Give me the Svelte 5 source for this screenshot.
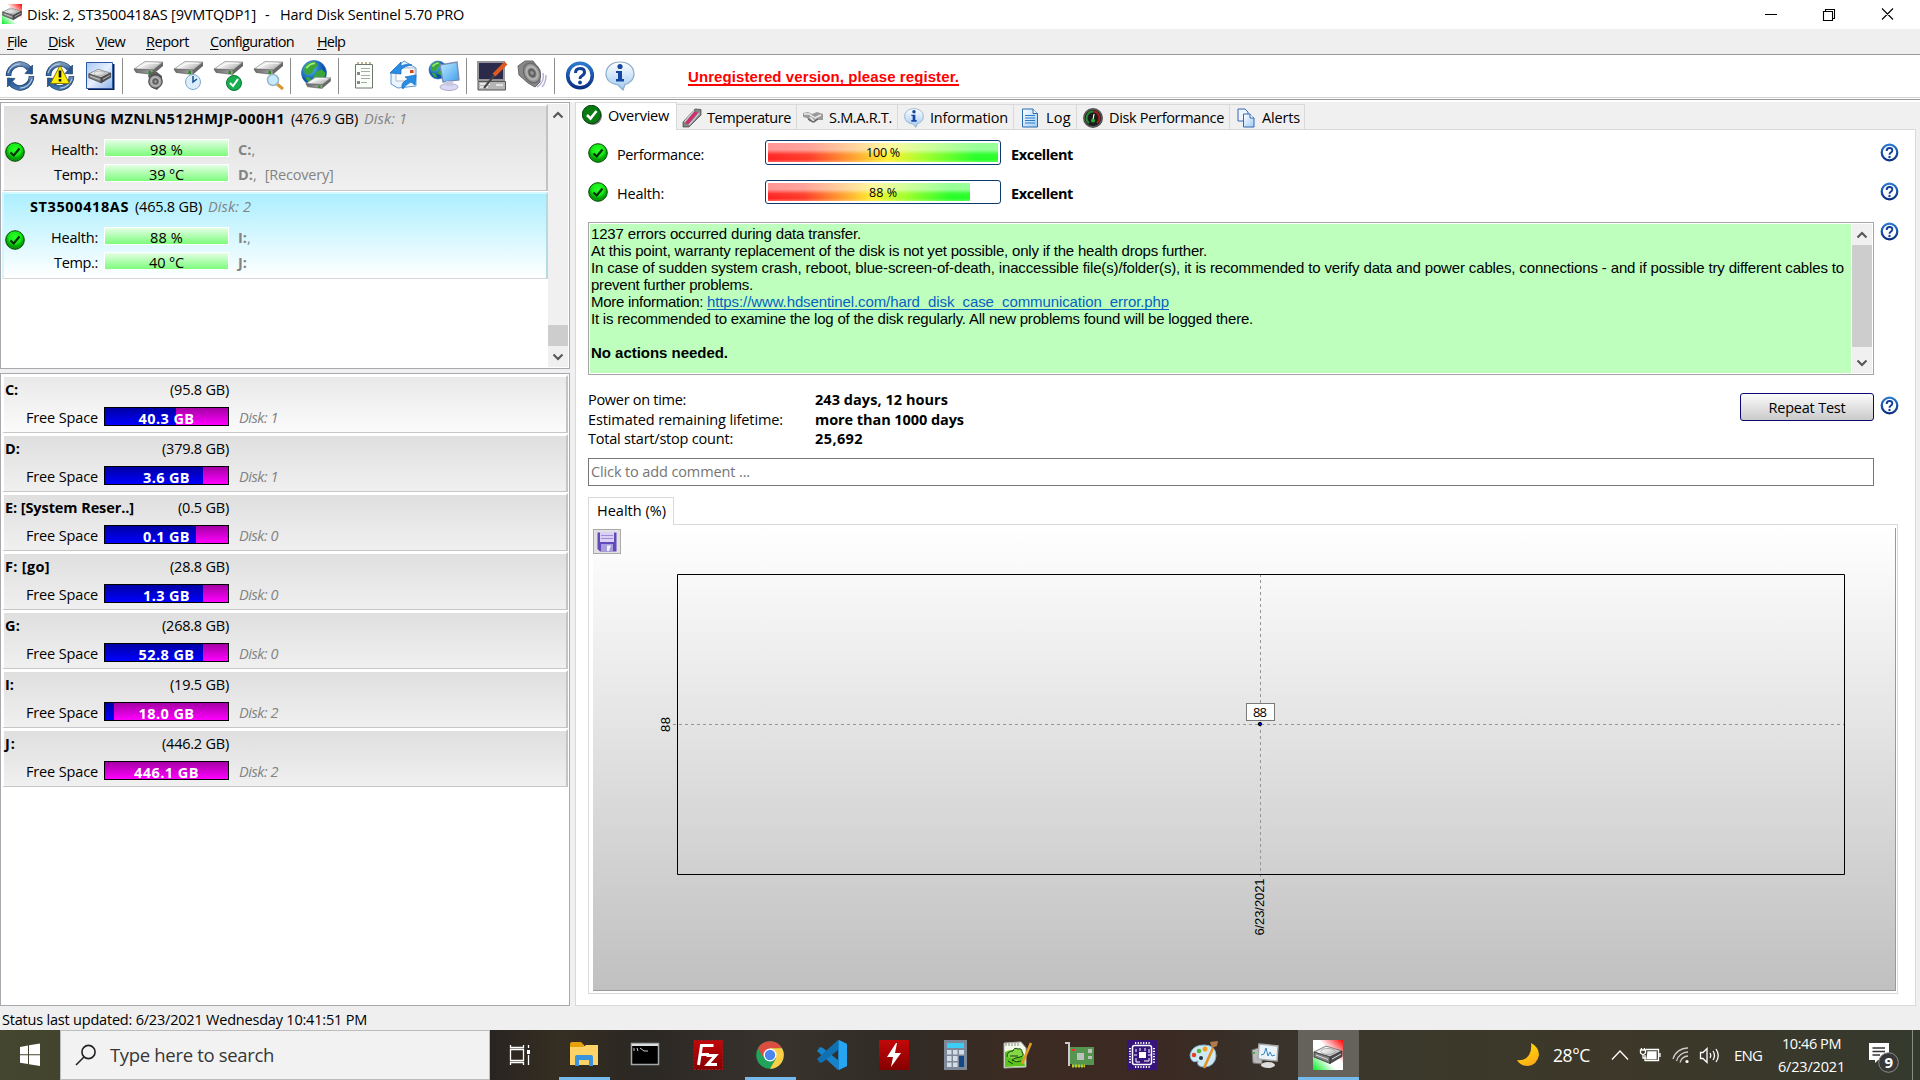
<script>
  // Spreads a text run over an exact pixel width through letter-spacing.
  function fit(node, width) {
    if (!width) return;
    const natural = node.getBoundingClientRect().width;
    node.style.letterSpacing = (width - natural) / node.textContent.length + 'px';
  }

  const menu = [['F', 'ile', 20, 8], ['D', 'isk', 26, 49], ['V', 'iew', 29, 97], ['R', 'eport', 43, 147], ['C', 'onfiguration', 84, 211], ['H', 'elp', 28, 318]];

  const disks = [
    { name: 'SAMSUNG MZNLN512HMJP-000H1', nw: 255, size: '(476.9 GB)', no: 'Disk: 1', health: '98 %', temp: '39 °C', a: 'C:', ac: ',', b: 'D:', bc: ',', extra: '[Recovery]', on: false },
    { name: 'ST3500418AS', nw: 99, size: '(465.8 GB)', no: 'Disk: 2', health: '88 %', temp: '40 °C', a: 'I:', ac: ',', b: 'J:', bc: '', extra: '', on: true }
  ];

  const drives = [
    { name: 'C:', nw: 13, size: '(95.8 GB)', sw: 59, free: '40.3 GB', fw: 56, used: 58, disk: 'Disk: 1' },
    { name: 'D:', nw: 15, size: '(379.8 GB)', sw: 67, free: '3.6 GB', fw: 47, used: 80, disk: 'Disk: 1' },
    { name: 'E: [System Reser..]', nw: 129, size: '(0.5 GB)', sw: 51, free: '0.1 GB', fw: 47, used: 74, disk: 'Disk: 0' },
    { name: 'F: [go]', nw: 45, size: '(28.8 GB)', sw: 59, free: '1.3 GB', fw: 47, used: 80, disk: 'Disk: 0' },
    { name: 'G:', nw: 15, size: '(268.8 GB)', sw: 67, free: '52.8 GB', fw: 56, used: 80, disk: 'Disk: 0' },
    { name: 'I:', nw: 9, size: '(19.5 GB)', sw: 59, free: '18.0 GB', fw: 56, used: 7.5, disk: 'Disk: 2' },
    { name: 'J:', nw: 11, size: '(446.2 GB)', sw: 67, free: '446.1 GB', fw: 65, used: 0, disk: 'Disk: 2' }
  ];

  const tabs = [
    { label: 'Temperature', w: 84, tab: 120, icon: thermo, lead: 5, gap: 5 },
    { label: 'S.M.A.R.T.', w: 63, tab: 101, icon: smart, lead: 6, gap: 6 },
    { label: 'Information', w: 78, tab: 116, icon: info, lead: 6, gap: 6 },
    { label: 'Log', w: 25, tab: 63, icon: logIcon, lead: 7, gap: 7 },
    { label: 'Disk Performance', w: 115, tab: 153, icon: gauge, lead: 6, gap: 6 },
    { label: 'Alerts', w: 38, tab: 75, icon: pages, lead: 7, gap: 7 }
  ];
</script>

{#snippet t(text, width, cls = '')}<span class="t {cls}" use:fit={width}>{text}</span>{/snippet}

{#snippet slab()}
  <path d="M1 9 12 1.5 30 2 20 10Z" fill="url(#lid)" stroke="#8d8d8d" stroke-width=".7" />
  <path d="M5 8.500 14 3 26 3.500" fill="none" stroke="#fff" opacity=".8" />
  <path d="M1 9 20 10V14.5L3 12.5Z" fill="url(#metal)" stroke="#555" stroke-width=".6" />
  <path d="M20 10 30 2V6L20 14.5Z" fill="#686868" />
  <path d="M15.500 11v3h2.500v-3Z" fill="#298b21" />
{/snippet}

{#snippet brick()}
  <path d="M1 12 13 6 29 11 17 17Z" fill="url(#lid)" stroke="#666" stroke-width=".8" />
  <path d="M1 12 17 17V23.500L1 17Z" fill="#7f7f7f" stroke="#333" stroke-width=".8" />
  <path d="M17 17 29 11V16.500L17 23.500Z" fill="#4d4d4d" stroke="#333" stroke-width=".8" />
  <ellipse cx="15" cy="11.500" rx="7" ry="3" fill="none" stroke="#aaa" />
  <path d="M3 15 15 19.500M19 19 28 14" stroke="#ddd" />
{/snippet}

{#snippet refresh()}
  <g fill="none">
    <path d="M3.500 15A11.500 11.500 0 0 1 24 7.500" stroke="#1d3f66" stroke-width="5.600" />
    <path d="M26.500 15A11.500 11.500 0 0 1 6 22.500" stroke="#1d3f66" stroke-width="5.600" />
    <path d="M3.500 14.600A11.500 11.500 0 0 1 24 7.500" stroke="url(#arrow)" stroke-width="4.300" />
    <path d="M26.500 15.400A11.500 11.500 0 0 1 6 22.500" stroke="url(#arrow)" stroke-width="4.300" />
    <path d="M3 12Q6 3.500 15 2.800M27 18Q24 26.500 15 27.200" stroke="#b3c7dd" stroke-width="1.200" />
  </g>
  <path d="M27.500 4V13L20 12.500Z" fill="#245799" stroke="#1d3f66" stroke-width=".7" />
  <path d="M2.500 26V17L10 17.500Z" fill="#245799" stroke="#1d3f66" stroke-width=".7" />
{/snippet}

{#snippet globe(cx, cy, r)}
  <circle {cx} {cy} {r} fill="url(#sea)" stroke="#1b5fa5" stroke-width=".6" />
  <g transform="translate({cx} {cy}) scale({r / 13})">
    <path d="M-10-6Q-6-12 1-12L4-8 0-4-2 0-7 2-10 0ZM2-1 8-4 12 0Q11 6 6 10L3 7-1 5ZM-9 4-4 5-1 11Q-7 11-9 4Z" fill="#3aa538" />
    <path d="M-8-5Q-4-10 1-10" stroke="#a6ef74" stroke-width="2" fill="none" />
  </g>
{/snippet}

{#snippet appIcon(size)}
  <svg width={size} height={size} viewBox="0 0 30 30">
    <path d="M0 0H30V30H0Z" fill="url(#rg)" />
    {@render brick()}
  </svg>
{/snippet}

{#snippet check()}
  <svg width="20" height="20" viewBox="0 0 20 20">
    <circle cx="10" cy="10" r="9.300" fill="url(#ball)" stroke="#064906" />
    <path d="M5.500 10.500 8.700 13.500 14.500 6.500" fill="none" stroke="#042d04" stroke-width="2.200" />
  </svg>
{/snippet}

{#snippet help(size)}
  <svg width={size} height={size} viewBox="0 0 30 30">
    <circle cx="15" cy="15" r="12.300" fill="#fff" stroke="url(#ring)" stroke-width="3.600" />
    <path d="M10.500 12.500Q10.500 8 15 8 19.500 8 19.500 11.800 19.500 14 16.700 15.500 15 16.500 15 18.500" fill="none" stroke="#123f99" stroke-width="3" />
    <circle cx="15" cy="22" r="1.900" fill="#123f99" />
  </svg>
{/snippet}

{#snippet info(size = 20)}
  <svg width={size} height={size} viewBox="0 0 30 30">
    <path d="M15 1C23 1 29 5.500 29 13 29 19 24 22.500 20 23.500L18 29 13 24C6 23 1 19 1 13 1 5.500 7 1 15 1Z" fill="url(#pale)" stroke="#8daac8" stroke-width="1.200" />
    <circle cx="15" cy="5.500" r="2.600" fill="#1546a2" />
    <path d="M11 10H17V18H19V20.500H11V18H13V12H11Z" fill="#1546a2" />
  </svg>
{/snippet}

{#snippet thermo()}
  <svg width="20" height="20" viewBox="0 0 20 20">
    <path d="M13 1 19 1.500 19 7 7 19 1 19 1 14Z" fill="#838383" stroke="#444" stroke-width=".7" />
    <path d="M14.500 4 4.500 15.500" stroke="#d32b71" stroke-width="3.400" />
    <path d="M17.500 5 7 17M12 2.500 2.500 14" stroke="#ccc" stroke-width="1.200" />
  </svg>
{/snippet}

{#snippet smart()}
  <svg width="20" height="20" viewBox="0 0 20 20">
    <path d="M0 5 5 4 9 6 14 4 20 6V12L15 12 11 15 6 13 4 10 0 9Z" fill="#9a9a9a" />
    <path d="M1 6 6 6 12 10 18 7M7 9 11 13" stroke="#eee" stroke-width="1.500" fill="none" />
    <path d="M5 11 10 14 15 11" stroke="#555" fill="none" />
  </svg>
{/snippet}

{#snippet logIcon()}
  <svg width="18" height="20" viewBox="0 0 18 20">
    <path d="M1.500 1H12L16.500 5.500V19H1.500Z" fill="url(#paper)" stroke="#296ab0" />
    <path d="M12 1V5.500H16.500" fill="#fff" stroke="#296ab0" />
    <path d="M4 7.500H14M4 10H14M4 12.500H14M4 15H14" stroke="#2e7cc7" />
  </svg>
{/snippet}

{#snippet gauge()}
  <svg width="20" height="20" viewBox="0 0 20 20">
    <circle cx="10" cy="10" r="9" fill="#1c1c1c" stroke="#555" stroke-width="2" />
    <path d="M6 15A6.500 6.500 0 0 1 10 3.500" fill="none" stroke="#268b2c" stroke-width="2" />
    <path d="M10 3.500A6.500 6.500 0 0 1 14 15" fill="none" stroke="#a32222" stroke-width="2" />
    <path d="M10 12 11 6" stroke="#fff" stroke-width="1.200" />
    <circle cx="10" cy="12.500" r="2" fill="#1fb531" />
  </svg>
{/snippet}

{#snippet pages()}
  <svg width="18" height="20" viewBox="0 0 18 20">
    <path d="M1 1H8L11 4V13H1Z" fill="#edf5fe" stroke="#3466b3" />
    <path d="M6.500 6H13L17 10V19H6.500Z" fill="url(#paper)" stroke="#3466b3" />
    <path d="M13 6V10H17" fill="#fff" stroke="#3466b3" />
  </svg>
{/snippet}

{#snippet chev(up)}
  <svg width="12" height="8" viewBox="0 0 12 8"><path d={up ? 'M1.500 6.500 6 2 10.500 6.500' : 'M1.500 1.500 6 6 10.500 1.500'} fill="none" stroke="#555" stroke-width="2" /></svg>
{/snippet}

<svg class="defs" width="0" height="0">
  <defs>
    <linearGradient id="lid" x2="1" y2=".6"><stop stop-color="#b5b5b5" /><stop offset=".4" stop-color="#f3f3f3" /><stop offset="1" stop-color="#adadad" /></linearGradient>
    <linearGradient id="metal"><stop stop-color="#6b6b6b" /><stop offset="1" stop-color="#a4a4a4" /></linearGradient>
    <linearGradient id="arrow" x2="0" y2="1"><stop stop-color="#7394bb" /><stop offset=".5" stop-color="#2d5f9c" /><stop offset="1" stop-color="#3f72ab" /></linearGradient>
    <linearGradient id="rg" y1="1" y2="0"><stop stop-color="#0e2" /><stop offset=".4" stop-color="#fff" /><stop offset=".6" stop-color="#fff" /><stop offset="1" stop-color="#f00" /></linearGradient>
    <linearGradient id="ring" x2="0" y2="1"><stop stop-color="#2b79cd" /><stop offset="1" stop-color="#0b2f83" /></linearGradient>
    <linearGradient id="pale" x2="0" y2="1"><stop stop-color="#fff" /><stop offset="1" stop-color="#9fcaf0" /></linearGradient>
    <linearGradient id="paper" x2="1" y2="1"><stop stop-color="#fff" /><stop offset="1" stop-color="#9fccf7" /></linearGradient>
    <linearGradient id="tile" x2="1" y2="1"><stop stop-color="#a9c8f5" /><stop offset=".5" stop-color="#e6effd" /><stop offset="1" stop-color="#8eb2ea" /></linearGradient>
    <linearGradient id="screen" x2="1" y2="1"><stop stop-color="#c0edff" /><stop offset="1" stop-color="#3f9dee" /></linearGradient>
    <linearGradient id="redsq" x2="0" y2="1"><stop stop-color="#c30808" /><stop offset="1" stop-color="#850000" /></linearGradient>
    <linearGradient id="moon" x2=".5" y2="1"><stop stop-color="#ffe600" /><stop offset="1" stop-color="#ffae18" /></linearGradient>
    <radialGradient id="sea" cx=".35" cy=".3"><stop stop-color="#68cbf6" /><stop offset="1" stop-color="#0b55b0" /></radialGradient>
    <radialGradient id="ball" cy=".35"><stop stop-color="#2cff2c" /><stop offset=".65" stop-color="#14ea14" /><stop offset="1" stop-color="#079c07" /></radialGradient>
    <radialGradient id="cone"><stop stop-color="#aaa" /><stop offset=".35" stop-color="#555" /><stop offset=".6" stop-color="#bbb" /><stop offset="1" stop-color="#777" /></radialGradient>
  </defs>
</svg>

<div class="window">
  <header class="title">
    {@render appIcon(20)}
    {@render t('Disk: 2, ST3500418AS [9VMTQDP1]', 229)}<span class="dash">-</span>{@render t('Hard Disk Sentinel 5.70 PRO', 184)}
    <svg class="winbtns" width="136" height="20" viewBox="0 0 136 20" fill="none" stroke="#000" stroke-width="1.100">
      <path d="M4 10.500H16M62.500 7.500H71.500V16.500H62.500ZM64.500 7.500V5.500H73.500V14.500H71.500M121 4.500 132 15.500M132 4.500 121 15.500" />
    </svg>
  </header>

  <nav class="menu">
    {#each menu as [k, rest, w, x]}
      <span class="cell" style:grid-column-start={x}><span class="t" use:fit={w}><u>{k}</u>{rest}</span></span>
    {/each}
  </nav>

  <div class="toolbar">
    <svg width="640" height="42" viewBox="0 0 640 42">
      <path d="M122.500 3V39M290.500 3V39M338.500 3V39M466.500 3V39M554.500 3V39" stroke="#8c8c8c" />
      <g transform="translate(5 6)">{@render refresh()}</g>
      <g transform="translate(45 6)">{@render refresh()}
        <path d="M15 4.500 24.500 22.500H5.500Z" fill="#ffee0a" stroke="#857800" /><path d="M15 9.500V16.500M15 18V20.500" stroke="#111" stroke-width="2.600" />
      </g>
      <path d="M88 9H114.500V35H88Z" fill="#111c49" /><path d="M86.500 7.500H112.500V33.500H86.500Z" fill="url(#tile)" stroke="#2d58a3" />
      <g transform="translate(88 9.500) scale(.78)">{@render brick()}</g>
      {#each [133, 173, 213, 253] as x}<g transform="translate({x} 5)">{@render slab()}</g>{/each}
      <path d="M148 20 152 17H157L162 21V29L157 35 151 32Z" fill="#5e5e5e" /><circle cx="155.500" cy="26.500" r="6.800" fill="url(#cone)" stroke="#444" />
      <circle cx="193" cy="27" r="7.500" fill="#dceefb" stroke="#7fa9ca" /><path d="M193 21V27L197 24" stroke="#174d90" stroke-width="1.500" fill="none" />
      <circle cx="234" cy="28" r="7.500" fill="#18ae4f" stroke="#087633" /><path d="M230 28 233 31 238 24" fill="none" stroke="#fff" stroke-width="2" />
      <path d="M277 29 283 34" stroke="#d79834" stroke-width="3" /><circle cx="273" cy="25" r="5.500" fill="#c7eafc" stroke="#98b7ca" stroke-width="1.500" />
      {@render globe(314, 18, 12.500)}
      <g transform="translate(305 21) scale(.86)">{@render slab()}</g>
      <path d="M355.500 9.500H372.500V33H355.500Z" fill="#fbfff9" stroke="#6f7770" /><path d="M358 9V7M362 9V7M366 9V7M370 9V7" stroke="#806f20" />
      <path d="M361 13.500H370M361 16.500H370M361 20.500H370M361 23.500H370M361 27.500H367" stroke="#aaa" /><path d="M357 17H360V20H357ZM357 26H360V29H357Z" fill="#888" />
      <path d="M391 17 404 6 416 13V31L398 33 391 29Z" fill="#ecf5ff" stroke="#5d9ad2" /><path d="M396 13H415V26H396Z" fill="#fff" stroke="#afb9c9" /><path d="M410 15H413.500V18H410Z" fill="#d54718" />
      <path d="M390 18 401 7V11Q408 8 412 10 404 11 401 15V19ZM403 34Q399 29 408 24L405 22 416 20 415 30 411 27Q405 30 403 34Z" fill="#278de5" stroke="#1768bb" stroke-width=".7" />
      {@render globe(438, 15, 9)}
      <path d="M440 10 457 7 459 25 443 27Z" fill="url(#screen)" stroke="#788eb4" stroke-width="1.400" /><ellipse cx="449" cy="32" rx="9" ry="3.500" fill="#dad8f2" stroke="#acaacb" /><path d="M446 26H453V31H446Z" fill="#c9c8e3" />
      <path d="M478 7H504V25H478Z" fill="#2c2a4a" stroke="#98969c" stroke-width="2" /><path d="M478 26.500H505.500V35H478Z" fill="#b5b5b5" stroke="#555" /><path d="M480 29H490M480 32H488M496 30H503" stroke="#f3f3f3" stroke-width="1.500" />
      <path d="M484 33 497 17" stroke="#444" stroke-width="2" /><path d="M494 20 506 8" stroke="#df5a20" stroke-width="4" />
      <path d="M518 11 525 6H533L540 15V27L535 32 528 28 519 20Z" fill="#888" stroke="#666" /><ellipse cx="532" cy="18" rx="8" ry="10.500" transform="rotate(-28 532 18)" fill="url(#cone)" stroke="#666" /><path d="M543 18Q545 27 537 32M546 20Q546 28 542 32" fill="none" stroke="#b5b3d7" stroke-width="1.500" />
      <g transform="translate(565 5.500)">{@render help(30)}</g>
      <g transform="translate(605 6)">{@render info(30)}</g>
    </svg>
    <span class="unreg">{@render t('Unregistered version, please register.', 271)}</span>
  </div>
  <div class="rule"></div>

  <main class="work">
    <div class="left">
      <section class="disks">
        <div class="disklist">
          {#each disks as d}
            <article class="disk" class:on={d.on}>
              <div class="dname">{@render t(d.name, d.nw, 'b')}{@render t(d.size, 67)}{@render t(d.no, 43, 'dim i')}</div>
              <div class="dbody">
                <div class="dcheck">{@render check()}</div>
                <div class="drow"><span class="lab">{@render t('Health:', 47)}</span><span class="meter">{@render t(d.health, 33)}</span><span class="dim"><b>{d.a}</b>{d.ac}</span></div>
                <div class="drow"><span class="lab">{@render t('Temp.:', 44)}</span><span class="meter">{@render t(d.temp, 35)}</span><span class="dim"><b>{d.b}</b>{d.bc}{#if d.extra}<span class="extra">{@render t(d.extra, 69)}</span>{/if}</span></div>
              </div>
            </article>
          {/each}
        </div>
        <div class="scroll"><span class="arr">{@render chev(true)}</span><span class="thumb"></span><span class="arr">{@render chev(false)}</span></div>
      </section>
      <section class="drives">
        {#each drives as d, n}
          <article class="drive" class:hot={n === 0}>
            <div class="vname">{@render t(d.name, d.nw, 'b')}{@render t(d.size, d.sw)}</div>
            <div class="vrow">
              <span class="lab">{@render t('Free Space', 72)}</span>
              <span class="space"><span class="used" style:width="{d.used}%"></span><span class="cap">{@render t(d.free, d.fw, 'b')}</span></span>
              {@render t(d.disk, 43, 'dim i')}
            </div>
          </article>
        {/each}
      </section>
    </div>

    <div class="right">
      <div class="tabs">
        <div class="tab active">
          <svg width="20" height="20" viewBox="0 0 20 20"><circle cx="11" cy="11" r="9" fill="#777" /><circle cx="9.500" cy="9.500" r="9.200" fill="#087a12" stroke="#04440a" /><path d="M5 10 8.500 13.500 14.500 6" fill="none" stroke="#fff" stroke-width="2.600" /></svg>
          {@render t('Overview', 61)}
        </div>
        {#each tabs as b}
          <div class="tab" style:width="{b.tab}px" style:padding-left="{b.lead}px" style:gap="{b.gap}px">{@render b.icon()}{@render t(b.label, b.w)}</div>
        {/each}
      </div>

      <div class="page">
        <div class="score">
          {@render check()}{@render t('Performance:', 87)}
          <div class="gauge"><div class="heat"></div><span class="val">{@render t('100 %', 34)}</span></div>
          {@render t('Excellent', 62, 'b')}<span></span>{@render help(19)}
        </div>
        <div class="score second">
          {@render check()}{@render t('Health:', 47)}
          <div class="gauge short"><div class="heat cut"></div><span class="val">{@render t('88 %', 28)}</span></div>
          {@render t('Excellent', 62, 'b')}<span></span>{@render help(19)}
        </div>

        <div class="report">
          <div class="box">
            <div class="lines">
              <p>{@render t('1237 errors occurred during data transfer.', 270)}</p>
              <p>{@render t('At this point, warranty replacement of the disk is not yet possible, only if the health drops further.', 616)}</p>
              <p>{@render t('In case of sudden system crash, reboot, blue-screen-of-death, inaccessible file(s)/folder(s), it is recommended to verify data and power cables, connections - and if possible try different cables to', 1253)}</p>
              <p>{@render t('prevent further problems.', 162)}</p>
              <p>{@render t('More information: ', 116)}{@render t('https://www.hdsentinel.com/hard_disk_case_communication_error.php', 462, 'link')}</p>
              <p>{@render t('It is recommended to examine the log of the disk regularly. All new problems found will be logged there.', 662)}</p>
              <p>&nbsp;</p>
              <p>{@render t('No actions needed.', 137, 'b')}</p>
            </div>
            <div class="scroll big"><span class="arr">{@render chev(true)}</span><span class="thumb"></span><span class="arr">{@render chev(false)}</span></div>
          </div>
          {@render help(19)}
        </div>

        <div class="facts">
          <dl>
            <dt>{@render t('Power on time:', 98)}</dt><dd>{@render t('243 days, 12 hours', 133, 'b')}</dd>
            <dt>{@render t('Estimated remaining lifetime:', 195)}</dt><dd>{@render t('more than 1000 days', 149, 'b')}</dd>
            <dt>{@render t('Total start/stop count:', 145)}</dt><dd>{@render t('25,692', 48, 'b')}</dd>
          </dl>
          <button>{@render t('Repeat Test', 77)}</button>
          {@render help(19)}
        </div>

        <div class="comment">{@render t('Click to add comment ...', 159)}</div>

        <div class="ctabs"><div class="ctab">{@render t('Health (%)', 69)}</div><div class="cline"></div></div>
        <div class="cpanel">
          <div class="plot">
            <svg width="1302" height="462" viewBox="0 0 1302 462">
              <g stroke="#969696" stroke-dasharray="3 3"><path d="M667.500 46V352" /><path d="M80 196.500H1251" /></g>
              <path d="M84.500 46.500H1251.500V346.500H84.500Z" fill="none" stroke="#000" />
              <path d="M653.500 175.500H681.500V192.500H653.500Z" fill="#fff" stroke="#000" stroke-dasharray="1 1" />
              <circle cx="667" cy="196" r="1.700" fill="#00c" stroke="#000" />
              <text class="seg" x="660" y="188.500" textLength="14">88</text>
              <text transform="translate(76.500 204) rotate(-90)" textLength="15">88</text>
              <text transform="translate(671 407.500) rotate(-90)" textLength="57">6/23/2021</text>
            </svg>
            <div class="save">
              <svg width="20" height="20" viewBox="0 0 20 20"><path d="M.500.500H19.500V19.500H3L.500 17Z" fill="#6247bd" /><path d="M3 0H17V10H3Z" fill="#d9d2f4" /><path d="M4 3.500H16M4 6.500H16" stroke="#9c8bd6" /><path d="M4 12H16V20H4Z" fill="#a99cdb" /><path d="M10 13.500H14L12 19H10Z" fill="#f2effc" /></svg>
            </div>
          </div>
        </div>
      </div>
    </div>
  </main>

  <div class="status">{@render t('Status last updated: 6/23/2021 Wednesday 10:41:51 PM', 365)}</div>

  <footer class="task">
    <div class="start"><svg width="20" height="26" viewBox="0 0 20 26"><path d="M0 5 8 3.500V12.300H0ZM9 3.300 20 1.500V12.300H9ZM0 13.300H8V22L0 20.700ZM9 13.300H20V24L9 22.300Z" fill="#fff" /></svg></div>
    <div class="search">
      <svg width="22" height="22" viewBox="0 0 22 22" fill="none" stroke="#222" stroke-width="1.600"><circle cx="13.500" cy="8" r="6.600" /><path d="M9 13 1 21" /></svg>
      {@render t('Type here to search', 164)}
    </div>
    <svg class="apps" width="900" height="50" viewBox="490 0 900 50">
      <path d="M1298 0H1359V50H1298Z" fill="#64625a" />
      <path d="M559 47H610V50H559ZM745 47H796V50H745ZM1298 47H1359V50H1298Z" fill="#76b9ed" />
      <g fill="none" stroke="#fff" stroke-width="1.300"><path d="M510.500 19.500H523.500V30.500H510.500ZM510.500 15V17.500H523.500V15M510.500 35V32.500H523.500V35M528.500 15V18M528.500 25V35" /></g><path d="M527 20H530V24H527Z" fill="#fff" />
      <path d="M570 14Q570 12 572 12H581L584 15V22H570Z" fill="#e5a00c" /><path d="M570 17H583L586 15H598V35H570Z" fill="#fdd367" /><path d="M575 35V27Q575 25 577 25H591Q593 25 593 27V36H589V30H579V36H575Z" fill="#3a93dc" />
      <path d="M631.500 13.500H658.500V34.500H631.500Z" fill="#000" stroke="#a2a8aa" stroke-width="1.500" /><path d="M632 15H658" stroke="#ddd" stroke-width="2" /><path d="M634 18V21M637 18 638 21M640 18 644 21H648" stroke="#ccc" fill="none" />
      <path d="M694 10.500H722.500V39.500H694Z" fill="url(#redsq)" stroke="#b31515" stroke-dasharray="2 1.500" />
      <path d="M698.500 35 701.500 15.500H713.500M700 24.500H709M706.500 25.500H715.500L707.500 34.500H717" stroke="#fff" stroke-width="3" fill="none" />
      <circle cx="770" cy="25" r="13.800" fill="#21a35b" /><path d="M758 18.200A13.800 13.800 0 0 1 782 18.200L770 18.500 764 28.500Z" fill="#db4d3f" /><path d="M782 18.200A13.800 13.800 0 0 1 770 38.800L776 28.500 770 18.200Z" fill="#fdcf46" /><circle cx="770" cy="25" r="6.500" fill="#fff" /><circle cx="770" cy="25" r="5.200" fill="#4a86ee" />
      <path d="M838 10 847 14V36L838 40 817 21 820 17 823 18 838 30Z" fill="#1683ca" /><path d="M838 20 823 32 820 33 817 29 838 10Z" fill="#1070b2" /><path d="M839 10 847 14V36L839 40Z" fill="#27a5f1" />
      <path d="M879 10H909V40H879Z" fill="url(#redsq)" /><path d="M896 13 887 27H893L891 37 901 23H895L897 13Z" fill="#fff" />
      <path d="M944 10H967V40H944Z" fill="#7d8999" /><path d="M947 13H964V18H947Z" fill="#3ccdf4" />
      <path d="M947 20H951.500V24.500H947ZM953 20H957.500V24.500H953ZM959 20H964V24.500H959ZM947 26H951.500V31H947ZM953 26H957.500V31H953ZM947 32.500H951.500V37H947ZM953 32.500H957.500V37H953Z" fill="#d4dde5" /><path d="M959 26H964V37H959Z" fill="#134786" />
      <path d="M1004 13 1021 12 1026 18V37L1004 38Z" fill="#f2fae8" stroke="#aaa" /><path d="M1005 22Q1012 18 1023 22L1025 36 1005 37Z" fill="#5cc31d" />
      <path d="M1007 27Q1007 21 1013 21 1014 17 1018 19 1022 18 1022 22 1025 26 1020 27 1014 28 1012 30 1016 33 1021 31M1010 26H1018M1008 31 1013 34" fill="#84d746" stroke="#193f0e" />
      <path d="M1022 34 1031 13" stroke="#df9c24" stroke-width="2.600" /><path d="M1006 13V16M1009 13V16M1012 13V16M1015 13V16M1018 13V16" stroke="#888" />
      <path d="M1065 13H1069V36" fill="none" stroke="#cacaca" stroke-width="2" /><path d="M1070 17H1094V35H1085V37H1072V34H1070Z" fill="#56954f" /><path d="M1077 23H1084V30H1077ZM1088 19H1092V23H1088ZM1088 26H1092V29H1088Z" fill="#bbc2bd" /><path d="M1072 19H1075V21H1072Z" fill="#e33" /><path d="M1072 36H1085" stroke="#bdca28" stroke-width="3" stroke-dasharray="2 1" />
      <path d="M1127 10H1157V40H1127Z" fill="#35147c" /><rect x="1132.500" y="15.500" width="19" height="19" rx="2" fill="none" stroke="#fff" stroke-width="1.500" /><path d="M1139 22H1146V28H1139Z" fill="#fff" /><path d="M1135 13H1150M1135 37H1150" stroke="#fff" stroke-width="2" stroke-dasharray="1.200 1.500" /><path d="M1130 18V33M1154 18V33" stroke="#fff" stroke-width="2" stroke-dasharray="1.200 1.500" /><path d="M1136 19V22M1140 18V21M1145 18V21M1149 19V23M1136 28V32H1140M1149 28V31H1144M1134 25H1137M1148 25H1151" fill="none" stroke="#fff" />
      <path d="M1190 25Q1192 15 1204 15 1216 15 1216 26 1215 36 1205 37 1196 37 1198 31 1191 34 1190 25Z" fill="#cfe9f4" stroke="#81b7d0" /><circle cx="1194" cy="25" r="2.300" fill="#e54224" /><circle cx="1199" cy="21" r="2.300" fill="#56b43c" /><circle cx="1205" cy="19" r="2.500" fill="#efa126" /><circle cx="1201" cy="28" r="2" fill="#28323c" /><path d="M1204 38 1213 18" stroke="#e69022" stroke-width="2.600" /><path d="M1210 12 1218 11 1217 16 1212 18Z" fill="#b2794a" />
      <path d="M1252 20 1262 17V34L1253 33Z" fill="#bababa" stroke="#777" /><path d="M1259 14 1278 16 1277 31 1258 29Z" fill="#e8f4fa" stroke="#aaa" stroke-width="1.500" /><path d="M1261 25 1264 24 1266 18 1268 26 1270 22 1272 26 1275 25" fill="none" stroke="#3783bc" /><ellipse cx="1268" cy="35" rx="7" ry="3" fill="#ddd" /><path d="M1253 22H1255V24H1253Z" fill="#3b3" />
      <g transform="translate(1313 10)">{@render appIcon(30)}</g>
    </svg>
    <div class="tray">
      <svg width="24" height="26" viewBox="0 0 24 26"><path d="M15 1Q23 5 23 13 21 23 12 24 4 24 1 18 9 19 13 13 16 8 15 1Z" fill="url(#moon)" /></svg>
      <span class="deg">{@render t('28°C', 37)}</span>
      <svg width="110" height="26" viewBox="1611 12 110 26" fill="none" stroke="#fff" stroke-width="1.300">
        <path d="M1612 29.500 1620 21 1628 29.500" />
        <path d="M1646 19.500H1658.500V30.500H1645V25M1660 23V27" /><path d="M1648 22H1656V28.500H1647Z" fill="#fff" /><path d="M1640.500 20H1645.500V23L1643 25 1640.500 23ZM1641.500 18V20M1644.500 18V20M1643 25V28H1646" />
        <path d="M1673 29A15 15 0 0 1 1688 18M1676.500 31A12 12 0 0 1 1688 22M1680 32.500A9 9 0 0 1 1688 26" stroke="#ccc" /><circle cx="1687" cy="31.500" r="1.600" fill="#fff" stroke="none" />
        <path d="M1700.500 22.500H1703L1707 18.500V32.500L1703 28.500H1700.500ZM1710 23Q1711.500 25.500 1710 28M1713 21Q1716 25.500 1713 30M1716 19Q1720.500 25.500 1716 32" />
      </svg>
      <span class="eng">{@render t('ENG', 28)}</span>
      <span class="clock">{@render t('10:46 PM', 59)}{@render t('6/23/2021', 67)}</span>
      <svg width="32" height="32" viewBox="0 0 32 32"><path d="M1 1H21V18H10L7 21V18H1Z" fill="#fff" /><path d="M4.500 6H17M4.500 9.500H17M4.500 13H12" stroke="#333" stroke-width="1.300" /><circle cx="20.500" cy="20.500" r="9.800" fill="#373737" stroke="#8d8d8d" /><text class="nine" x="16.500" y="26">9</text></svg>
      <span class="peek"></span>
    </div>
  </footer>
</div>

<style>
  :global(body) { margin: 0; overflow: hidden; }
  .defs { position: absolute; }
  .window { width: 1920px; height: 1080px; display: flex; flex-direction: column; background: #f0f0f0; color: #000; font: 14.5px/22px "Open Sans", sans-serif; overflow: hidden; }
  .window * { box-sizing: border-box; }
  .window svg { display: block; flex: none; }
  .t { white-space: pre; flex: none; justify-self: start; }
  .b { font-weight: 700; }
  .i { font-style: italic; }
  .dim { color: #838383; }

  .title { height: 29px; background: #fff; display: flex; align-items: flex-start; padding: 4px 23px 0 2px; gap: 5px; }
  .title .dash { width: 14px; padding-left: 4px; }
  .winbtns { margin-left: auto; }
  .menu { height: 26px; border-bottom: 1px solid #999; background: #efefef; display: grid; grid-template-columns: repeat(400, 1px); }
  .menu .cell { width: max-content; grid-row: 1; padding-top: 2px; }
  .menu u { text-underline-offset: 2px; }
  .toolbar { height: 42px; background: #fff; display: flex; }
  .unreg { margin-left: 48px; padding-top: 12px; color: #f00; font: bold 15px/20px "Liberation Sans", sans-serif; text-decoration: underline; text-decoration-thickness: 2px; text-underline-offset: 2px; text-decoration-skip-ink: none; }
  .rule { height: 5px; border-top: 1px solid #d4d4d4; background: linear-gradient(#fff 1px, #999 1px 2px, #fff 2px); }

  .work { height: 904px; display: grid; grid-template-columns: 570px 5px 1fr; }
  .work > .right { grid-column: 3; }
  .left { display: flex; flex-direction: column; gap: 4px; }
  .disks { height: 267px; border: 1px solid #a8a8ae; background: #fff; display: flex; padding: 1px 1px 1px 1px; }
  .disklist { flex: 1; }
  .disk { height: 87px; border: 2px solid #fff; border-right-color: #c2c2c2; border-bottom: 1px solid #c6c6c6; background: linear-gradient(#dfdfdf, #f0f0f0); padding: 2px 0 0; margin-bottom: 1px; }
  .disk.on { border-color: #d5f8ff #b5dbe2 #d6d6d6 #d5f8ff; background: linear-gradient(#acefff, #fff); }
  .dname { display: flex; gap: 6px; padding-left: 26px; height: 31px; }
  .dbody { display: grid; grid-template-columns: 20px 1fr; grid-template-rows: 25px 25px; padding-left: 1px; }
  .dcheck { grid-row: 1 / 3; padding-top: 3px; }
  .drow { display: grid; grid-template-columns: 73px 125px 1fr; column-gap: 6px; }
  .lab { display: flex; justify-content: flex-end; }
  .meter { height: 18px; border: 1px solid #fff; background: linear-gradient(#e4ffe4, #7dfc7d); display: flex; justify-content: center; line-height: 20px; }
  .drow .dim { padding-left: 3px; }
  .extra { padding-left: 8px; }
  .scroll { width: 20px; background: #f0f0f0; display: flex; flex-direction: column; align-items: center; }
  .arr { height: 21px; display: flex; align-items: center; }
  .thumb { width: 20px; height: 21px; background: #cdcdcd; margin-top: auto; }
  .drives { height: 633px; border: 1px solid #a8a8ae; background: #fff; padding: 1px; }
  .drive { height: 58px; border: 2px solid #fff; border-right-color: #c4c4c4; border-bottom: 1px solid #c6c6c6; background: linear-gradient(#dfdfdf, #f0f0f0); padding-top: 2px; margin-bottom: 1px; }
  .drive.hot { background: linear-gradient(#e9e9e9, #fbfbfb); }
  .vname { display: flex; justify-content: space-between; width: 225px; padding-left: 1px; height: 28px; }
  .vrow { display: grid; grid-template-columns: 94px 125px 1fr; column-gap: 6px; }
  .vrow > .t { padding-left: 4px; }
  .space { height: 19px; border: 1px solid #000; display: grid; background: linear-gradient(#a400a4, #f0f); color: #fff; }
  .used { grid-area: 1 / 1; height: 17px; background: linear-gradient(#0000a4, #00f); }
  .cap { grid-area: 1 / 1; display: flex; justify-content: center; line-height: 21px; height: 17px; }
  .vrow .lab, .vrow > .t { line-height: 21px; height: 19px; }

  .tabs { height: 27px; display: flex; align-items: flex-end; }
  .tab { height: 26px; border: 1px solid #d9d9d9; border-left: 0; background: #f0f0f0; display: flex; align-items: center; margin-bottom: -1px; padding-top: 1px; }
  .tab.active { width: 102px; height: 28px; border-left: 1px solid #d9d9d9; border-bottom: 0; background: #fff; position: relative; padding: 0 0 3px 6px; gap: 6px; }
  .tab.active .t { padding-top: 1px; }
  .page { width: 1341px; height: 877px; border: 1px solid #d9d9d9; background: #fff; padding: 10px 0 0 12px; display: flex; flex-direction: column; }
  .score { height: 25px; display: grid; grid-template-columns: 29px 148px 246px 62px 807px 19px; align-items: start; }
  .score > :global(svg) { margin-top: 3px; }
  .score .t { margin-top: 4px; }
  .second { margin-top: 15px; }
  .second > .t { margin-top: 3px; }
  .second > :global(svg) { margin-top: 2px; }
  .gauge { width: 236px; height: 25px; border: 1.500px solid #0b3a70; border-radius: 3px; padding: 2px; display: grid; }
  .gauge.short { height: 24px; }
  .heat { grid-area: 1 / 1; background: linear-gradient(#fff8 0, #fff8 35%, #fff1 60%, #fff0 85%, #fff4), linear-gradient(90deg, #ff2020, #ff3a26 18%, #ff9a2c 36%, #fff02e 52%, #a0ff28 68%, #24ff24 90%); }
  .cut { width: 88%; }
  .gauge .val { grid-area: 1 / 1; display: flex; justify-content: center; font-size: 12.500px; line-height: 20px; height: 18px; }
  .gauge .val .t { margin-top: 0; }
  .report { margin-top: 17px; display: flex; gap: 6px; }
  .box { width: 1286px; height: 153px; border: 1px solid #a5a5a5; padding: 1px; display: flex; background: #fff; }
  .lines { width: 1261px; background: #beffbe; padding: 1px 0 0 1px; font: 15px/17px "Liberation Sans", sans-serif; }
  .lines p { margin: 0; height: 17px; white-space: nowrap; }
  .link { color: #0563c1; text-decoration: underline; text-decoration-skip-ink: none; text-underline-offset: 2px; }
  .big { margin-left: 1px; }
  .big .thumb { height: 102px; margin: 0 0 auto; }
  .facts { margin-top: 14px; display: grid; grid-template-columns: 1152px 134px 26px; height: 69px; }
  .facts > :global(svg) { margin: 7px 0 0 6px; }
  dl { margin: 0; display: grid; grid-template-columns: 227px 1fr; grid-auto-rows: 19.700px; align-content: start; }
  dd { margin: 0; }
  dt, dd { display: flex; }
  button { margin-top: 4px; height: 28px; border: 1.500px solid #0a0a72; border-radius: 3px; background: linear-gradient(#fbfbfb, #cacaca); font: inherit; padding: 2px 0 0; display: flex; justify-content: center; align-items: center; color: #000; }
  .comment { width: 1286px; height: 28px; border: 1px solid #777; color: #757575; padding: 2px; display: flex; }
  .ctabs { margin-top: 11px; height: 28px; display: flex; width: 1310px; }
  .ctab { width: 86px; border: 1px solid #d9d9d9; border-bottom: 0; padding: 2px 0 0 8px; }
  .cline { flex: 1; border-bottom: 1px solid #d9d9d9; }
  .cpanel { width: 1310px; height: 469px; border: 1px solid #d9d9d9; border-top: 0; padding: 3px 2px 2px 4px; }
  .plot { position: relative; width: 1303px; height: 463px; border-right: 1px solid #999; border-bottom: 1px solid #999; background: linear-gradient(#fff, #c0c0c0); }
  .plot text { font: 13px "Liberation Sans", sans-serif; }
  .plot .seg { font-family: "Open Sans", sans-serif; }
  .save { position: absolute; left: 0; top: 1px; width: 28px; height: 25px; border: 1px solid #aaa; background: #e1e1e1; display: flex; align-items: center; justify-content: center; }

  .status { height: 24px; padding: 3px 2px; background: #efefef; line-height: 22px; }
  .task { height: 50px; display: flex; background: linear-gradient(90deg, #45462f 0, #3a3929 380px, #282420 489px, #352e22 560px, #2b2723 640px, #38332d 780px, #302b25 900px, #3c2b22 1020px, #3b2923 1160px, #38322a 1260px, #3b392b 1400px, #3d3829 1620px, #37392d 1860px, #343a2d 1920px); }
  .start { width: 60px; display: flex; align-items: center; justify-content: center; }
  .search { width: 430px; background: #f2f2f2; border: 1px solid #bcbcbc; display: flex; align-items: center; padding-left: 14px; gap: 13px; font-size: 18.500px; line-height: 26px; color: #363636; }
  .tray { width: 530px; display: flex; align-items: center; padding-left: 126px; color: #fff; }
  .deg { width: 71px; padding-left: 13px; font-size: 17.500px; line-height: 26px; display: flex; }
  .eng { width: 57px; padding-left: 13px; font-size: 15px; display: flex; }
  .clock { width: 67px; display: flex; flex-direction: column; align-items: center; line-height: 23px; font-size: 14.500px; }
  .clock + :global(svg) { margin: 6px 0 0 23px; }
  .nine { font: bold 15px "Open Sans", sans-serif; fill: #fff; }
  .peek { width: 1px; height: 50px; background: #898b82; margin-left: 12px; }
</style>
